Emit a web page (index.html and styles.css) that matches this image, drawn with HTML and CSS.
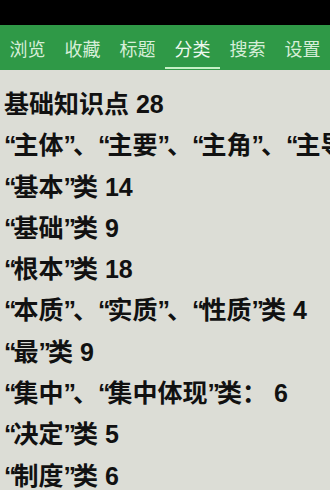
FILE: index.html
```html
<!DOCTYPE html>
<html lang="zh">
<head>
<meta charset="utf-8">
<link rel="stylesheet" href="styles.css">
</head>
<body>
<div class="status"></div>
<nav class="tabs">
  <div class="tab">浏览</div>
  <div class="tab">收藏</div>
  <div class="tab">标题</div>
  <div class="tab active">分类</div>
  <div class="tab">搜索</div>
  <div class="tab">设置</div>
</nav>
<main class="list">
  <div class="item">基础知识点 28</div>
  <div class="item"><span class="q">“</span>主体<span class="q">”</span>、<span class="q">“</span>主要<span class="q">”</span>、<span class="q">“</span>主角<span class="q">”</span>、<span class="q">“</span>主导<span class="q">”</span>类 7</div>
  <div class="item"><span class="q">“</span>基本<span class="q">”</span>类 14</div>
  <div class="item"><span class="q">“</span>基础<span class="q">”</span>类 9</div>
  <div class="item"><span class="q">“</span>根本<span class="q">”</span>类 18</div>
  <div class="item"><span class="q">“</span>本质<span class="q">”</span>、<span class="q">“</span>实质<span class="q">”</span>、<span class="q">“</span>性质<span class="q">”</span>类 4</div>
  <div class="item"><span class="q">“</span>最<span class="q">”</span>类 9</div>
  <div class="item"><span class="q">“</span>集中<span class="q">”</span>、<span class="q">“</span>集中体现<span class="q">”</span>类： 6</div>
  <div class="item"><span class="q">“</span>决定<span class="q">”</span>类 5</div>
  <div class="item"><span class="q">“</span>制度<span class="q">”</span>类 6</div>
</main>
</body>
</html>
```
FILE: styles.css
```css
html, body {
  margin: 0;
  padding: 0;
  background: #dcddd6;
  overflow: hidden;
}
.status {
  height: 25px;
  background: #000;
}
.tabs {
  display: flex;
  height: 45px;
  background: #2f9947;
}
.tab {
  position: relative;
  width: 55px;
  flex: none;
  display: flex;
  align-items: center;
  justify-content: center;
  font-family: "Noto Sans CJK SC", sans-serif;
  font-size: 18px;
  color: #d6eed8;
}
.tab.active {
  color: #eef8ee;
}
.tab.active::after {
  content: "";
  position: absolute;
  left: 0;
  right: 0;
  bottom: 1px;
  height: 2px;
  background: #c6f0c6;
}
.list {
  padding: 14px 0 0 4px;
}
.item {
  font-family: "Liberation Sans", "Noto Sans CJK SC", sans-serif;
  font-weight: bold;
  font-size: 25px;
  line-height: 41.3px;
  color: #111;
  white-space: nowrap;
  overflow: hidden;
}
.q {
  letter-spacing: -3px;
}
```
